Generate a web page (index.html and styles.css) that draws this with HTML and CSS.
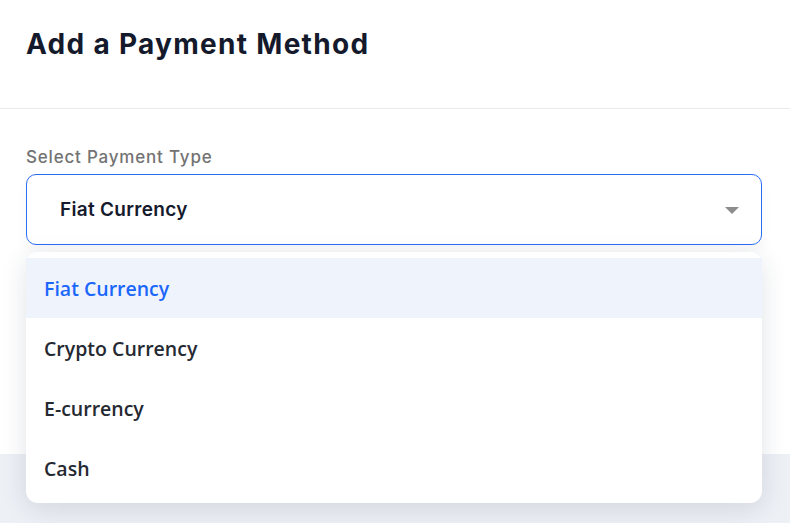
FILE: index.html
```html
<!DOCTYPE html>
<html lang="en">
<head>
<meta charset="utf-8">
<title>Add a Payment Method</title>
<link rel="stylesheet" href="styles.css">
</head>
<body>
<div class="modal">
  <header class="modal-header">
    <h1 class="title">Add a Payment Method</h1>
  </header>
  <section class="modal-body">
    <label class="field-label">Select Payment Type</label>
    <div class="select-wrap">
      <div class="select">
        <span class="select-value">Fiat Currency</span>
        <span class="caret"></span>
      </div>
      <ul class="menu">
        <li class="menu-item active">Fiat Currency</li>
        <li class="menu-item">Crypto Currency</li>
        <li class="menu-item">E-currency</li>
        <li class="menu-item">Cash</li>
      </ul>
    </div>
  </section>
  <footer class="modal-footer"></footer>
</div>
</body>
</html>
```
FILE: styles.css
```css
* { box-sizing: border-box; }
html, body { margin: 0; padding: 0; }
body {
  width: 790px;
  height: 523px;
  overflow: hidden;
  background: #ffffff;
  font-family: "Inter", "Liberation Sans", sans-serif;
}
.modal {
  display: flex;
  flex-direction: column;
  height: 523px;
}
.modal-header {
  height: 109px;
  border-bottom: 1px solid #e9eaee;
  padding: 28px 28px 0 26px;
}
.title {
  margin: 0;
  font-size: 28px;
  font-weight: 700;
  color: #141a2c;
  letter-spacing: 1.3px;
  line-height: 32px;
}
.modal-body {
  padding: 38px 28px 0 26px;
  height: 345px;
  background: #ffffff;
}
.field-label {
  display: block;
  font-size: 17px;
  font-weight: 500;
  color: #737373;
  letter-spacing: 0.8px;
  line-height: 20px;
  margin-bottom: 7px;
}
.select-wrap {
  position: relative;
}
.select {
  height: 71px;
  border: 1px solid #2a6ef5;
  border-radius: 10px;
  display: flex;
  align-items: center;
  justify-content: space-between;
  padding: 0 22px 0 33px;
  background: #fff;
  box-shadow: 0 6px 14px rgba(40, 50, 80, 0.04);
}
.select-value {
  font-size: 19px;
  font-weight: 600;
  letter-spacing: 0.3px;
  color: #151a2d;
}
.caret {
  width: 0;
  height: 0;
  border-left: 7px solid transparent;
  border-right: 7px solid transparent;
  border-top: 7px solid #8d8d8d;
  margin-top: 2px;
}
.menu {
  position: absolute;
  left: 0;
  right: 0;
  top: 78px;
  margin: 0;
  padding: 6px 0 5px;
  list-style: none;
  background: #fff;
  border-radius: 12px;
  box-shadow: 0 6px 26px rgba(30, 45, 80, 0.13);
  z-index: 2;
}
.menu-item {
  height: 60px;
  display: flex;
  align-items: center;
  padding: 0 18px;
  font-family: "Open Sans", "Noto Sans", sans-serif;
  font-size: 19.5px;
  font-weight: 600;
  color: #252932;
}
.menu-item.active {
  background: #eff3fb;
  color: #1b67fb;
}
.modal-footer {
  flex: 1;
  background: #edf0f5;
}
```
